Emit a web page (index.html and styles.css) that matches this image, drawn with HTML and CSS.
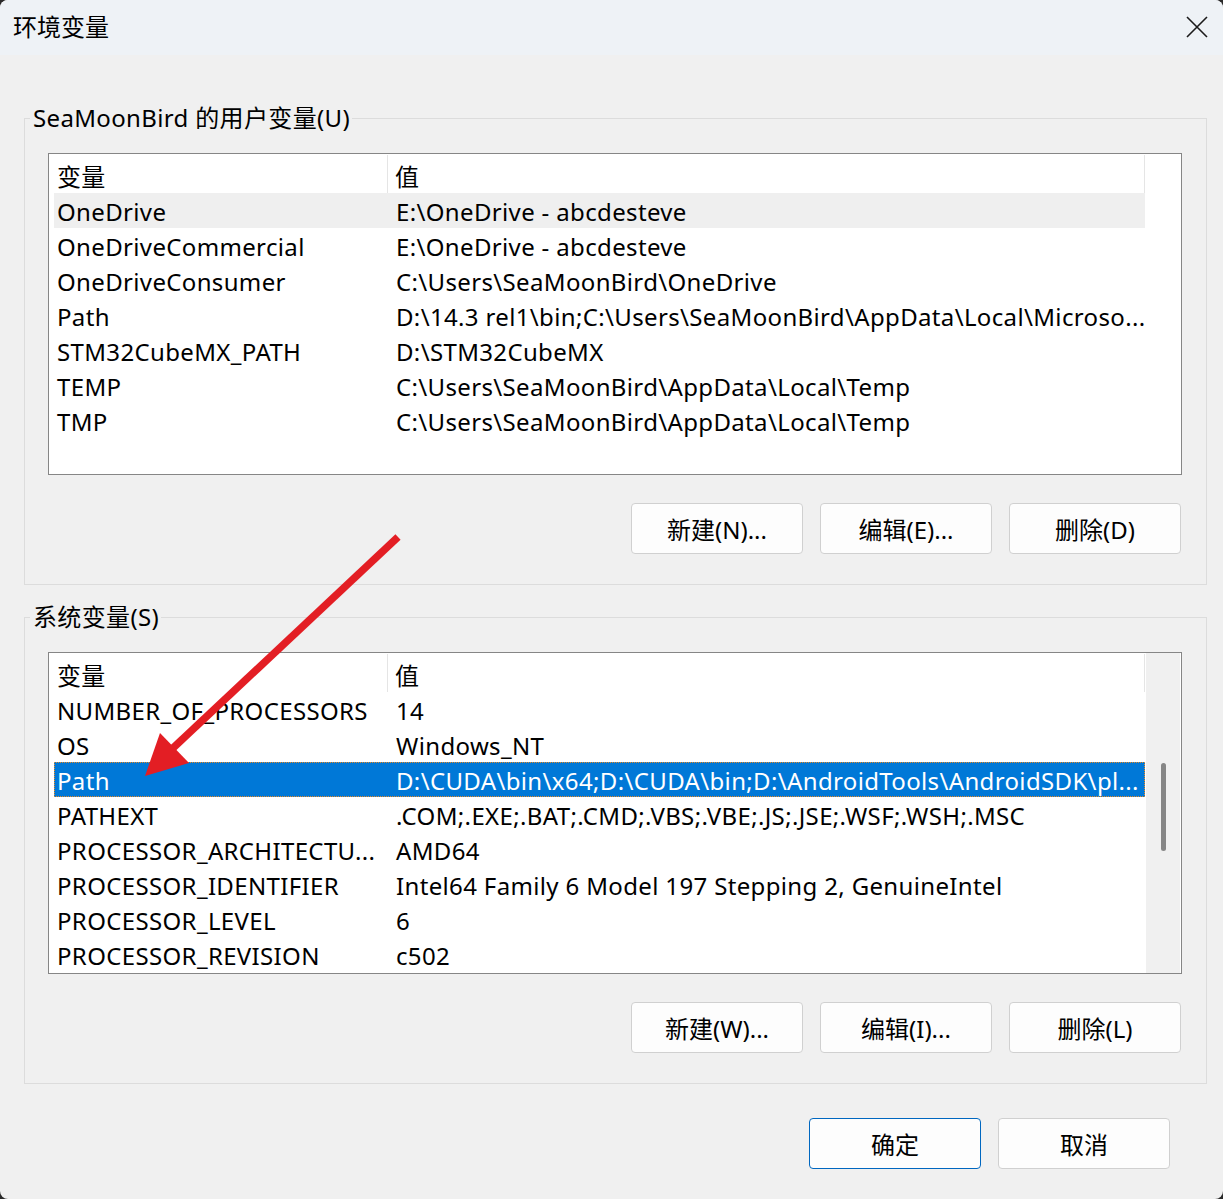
FILE: index.html
```html
<!DOCTYPE html>
<html lang="zh-CN">
<head>
<meta charset="utf-8">
<title>环境变量</title>
<link rel="stylesheet" href="styles.css">
</head>
<body>
<div class="window">
  <div class="titlebar">
    <span class="title">环境变量</span>
    <svg class="close" width="22" height="22" viewBox="0 0 22 22" aria-hidden="true">
      <path d="M1 1 L21 21 M21 1 L1 21" stroke="#1b1b1b" stroke-width="1.6" fill="none"/>
    </svg>
  </div>

  <div class="content">
    <fieldset class="group">
      <legend>SeaMoonBird 的用户变量(U)</legend>
      <div class="list">
        <div class="rows">
          <div class="row head"><span class="c1">变量</span><span class="c2">值</span></div>
          <div class="row hover"><span class="c1">OneDrive</span><span class="c2">E:\OneDrive - abcdesteve</span></div>
          <div class="row"><span class="c1">OneDriveCommercial</span><span class="c2">E:\OneDrive - abcdesteve</span></div>
          <div class="row"><span class="c1">OneDriveConsumer</span><span class="c2">C:\Users\SeaMoonBird\OneDrive</span></div>
          <div class="row"><span class="c1">Path</span><span class="c2">D:\14.3 rel1\bin;C:\Users\SeaMoonBird\AppData\Local\Microso...</span></div>
          <div class="row"><span class="c1">STM32CubeMX_PATH</span><span class="c2">D:\STM32CubeMX</span></div>
          <div class="row"><span class="c1">TEMP</span><span class="c2">C:\Users\SeaMoonBird\AppData\Local\Temp</span></div>
          <div class="row"><span class="c1">TMP</span><span class="c2">C:\Users\SeaMoonBird\AppData\Local\Temp</span></div>
        </div>
      </div>
      <div class="buttons">
        <button class="btn">新建(N)...</button>
        <button class="btn">编辑(E)...</button>
        <button class="btn">删除(D)</button>
      </div>
    </fieldset>

    <fieldset class="group">
      <legend>系统变量(S)</legend>
      <div class="list">
        <div class="rows">
          <div class="row head"><span class="c1">变量</span><span class="c2">值</span></div>
          <div class="row"><span class="c1">NUMBER_OF_PROCESSORS</span><span class="c2">14</span></div>
          <div class="row"><span class="c1">OS</span><span class="c2">Windows_NT</span></div>
          <div class="row selected"><span class="c1">Path</span><span class="c2">D:\CUDA\bin\x64;D:\CUDA\bin;D:\AndroidTools\AndroidSDK\pl...</span></div>
          <div class="row"><span class="c1">PATHEXT</span><span class="c2">.COM;.EXE;.BAT;.CMD;.VBS;.VBE;.JS;.JSE;.WSF;.WSH;.MSC</span></div>
          <div class="row"><span class="c1">PROCESSOR_ARCHITECTU...</span><span class="c2">AMD64</span></div>
          <div class="row"><span class="c1">PROCESSOR_IDENTIFIER</span><span class="c2">Intel64 Family 6 Model 197 Stepping 2, GenuineIntel</span></div>
          <div class="row"><span class="c1">PROCESSOR_LEVEL</span><span class="c2">6</span></div>
          <div class="row"><span class="c1">PROCESSOR_REVISION</span><span class="c2">c502</span></div>
        </div>
        <div class="scrollbar"><div class="thumb"></div></div>
      </div>
      <div class="buttons">
        <button class="btn">新建(W)...</button>
        <button class="btn">编辑(I)...</button>
        <button class="btn">删除(L)</button>
      </div>
    </fieldset>

    <div class="dialog-buttons">
      <button class="btn default">确定</button>
      <button class="btn">取消</button>
    </div>
  </div>

  <!-- annotation arrow drawn over the dialog -->
  <svg class="arrow" width="1223" height="1199" viewBox="0 0 1223 1199" aria-hidden="true">
    <line x1="398" y1="537" x2="172" y2="749" stroke="#e31e24" stroke-width="7.5"/>
    <polygon points="145,776 160,733 189,763" fill="#e31e24"/>
  </svg>
</div>
</body>
</html>
```

FILE: styles.css
```css
html {
  background: #2a2a2a;
}

body {
  margin: 0;
  font-family: "Noto Sans", "Noto Sans CJK SC", sans-serif;
  font-size: 24px;
  letter-spacing: 0.35px;
  color: #000;
}

.window {
  position: relative;
  width: 1223px;
  height: 1199px;
  background: #f0f0f0;
  border-radius: 8px;
  overflow: hidden;
  display: flex;
  flex-direction: column;
}

.titlebar {
  height: 55px;
  flex: none;
  background: #eef2f6;
  display: flex;
  align-items: center;
  justify-content: space-between;
  padding: 0 15px 0 13px;
}

.title {
  font-size: 24px;
  line-height: 30px;
  letter-spacing: 0;
  margin-top: -2px;
}

.close {
  margin-top: -1px;
}

.content {
  padding-top: 48px;
  display: flex;
  flex-direction: column;
}

.group {
  margin: 0 16px 0 24px;
  padding: 0 24px 30px 23px;
  border: 1px solid #dcdcdc;
  min-width: 0;
}

.group + .group {
  margin-top: 17px;
}

.group legend {
  margin-left: -18px;
  padding: 0 2px 0 3px;
  line-height: 30px;
  font-size: 24px;
}

.list {
  margin-top: 20px;
  height: 322px;
  box-sizing: border-box;
  border: 1px solid #868686;
  background: #fff;
  display: flex;
  overflow: hidden;
}

.rows {
  width: 1091px;
  margin-left: 5px;
  flex: none;
}

.row {
  display: flex;
  height: 35px;
  align-items: center;
  white-space: nowrap;
  padding-top: 2px;
  box-sizing: border-box;
}

.row .c1 {
  width: 334px;
  flex: none;
  padding-left: 3px;
  box-sizing: border-box;
  overflow: hidden;
}

.row .c2 {
  flex: 1;
  padding-left: 8px;
  overflow: hidden;
}

.row.head {
  height: 39px;
  padding-top: 0;
}

.row.head .c1 {
  align-self: stretch;
  display: flex;
  align-items: center;
  border-right: 1px solid #e5e5e5;
  margin-top: 1px;
  padding-top: 2px;
}

.row.head .c2 {
  align-self: stretch;
  display: flex;
  align-items: center;
  padding-left: 7px;
  padding-top: 2px;
  border-right: 1px solid #e5e5e5;
  margin-top: 1px;
}

.row.hover {
  background: #efefef;
}

.row.selected {
  background: #0078d7;
  color: #fff;
  outline: 1px dotted #e88a26;
  outline-offset: -1px;
}

.scrollbar {
  flex: none;
  width: 34px;
  margin-left: 1px;
  background: #f0f0f0;
  display: flex;
  justify-content: center;
  padding-top: 110px;
  box-sizing: border-box;
}

.thumb {
  width: 5px;
  height: 88px;
  border-radius: 3px;
  background: #868686;
  margin-left: 1px;
}

.buttons {
  display: flex;
  justify-content: flex-end;
  gap: 17px;
  margin-top: 28px;
  margin-right: 1px;
}

.btn {
  width: 172px;
  height: 51px;
  box-sizing: border-box;
  background: #fdfdfd;
  border: 1px solid #d0d0d0;
  border-radius: 4px;
  font-family: inherit;
  font-size: 24px;
  letter-spacing: 0;
  color: #000;
  padding: 0;
}

.btn.default {
  border-color: #0067c0;
}

.dialog-buttons {
  display: flex;
  justify-content: flex-end;
  gap: 17px;
  margin-top: 34px;
  margin-right: 53px;
}

.arrow {
  position: absolute;
  left: 0;
  top: 0;
  pointer-events: none;
}
```
